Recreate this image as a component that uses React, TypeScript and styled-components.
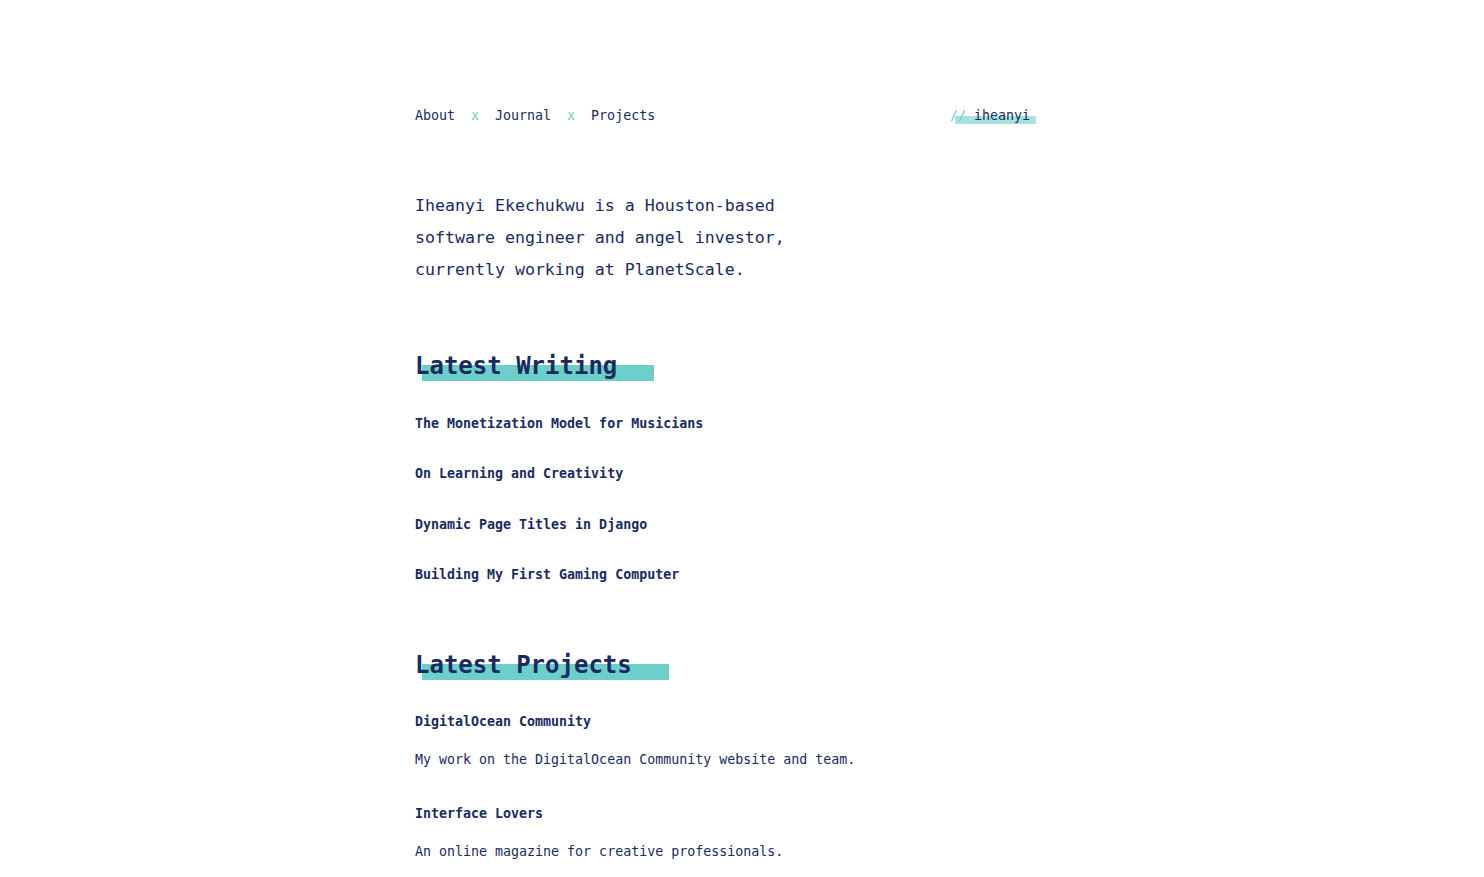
import React from 'react'
import styled, { createGlobalStyle } from 'styled-components'

const navy = '#1a2a5e'
const teal = '#6ccfca'

const GlobalStyle = createGlobalStyle`
  body {
    margin: 0;
    background: #fff;
    color: ${navy};
    font-family: "DejaVu Sans Mono", "Liberation Mono", monospace;
  }
`

const Page = styled.div`
  width: 654px;
  margin: 0 auto;
  padding: 106px 0 40px;
`

const Header = styled.header`
  width: 621px;
  display: flex;
  justify-content: space-between;
  align-items: center;
  font-size: 13.3px;
  line-height: 20px;
`

const Nav = styled.nav`
  display: flex;
  gap: 16px;
`

const NavLink = styled.a`
  color: ${navy};
  text-decoration: none;
`

const Sep = styled.span`
  color: ${teal};
`

const Logo = styled.a`
  position: relative;
  z-index: 0;
  color: ${navy};
  text-decoration: none;
  padding-right: 6px;

  &::after {
    content: '';
    position: absolute;
    z-index: -1;
    left: 5px;
    right: 0;
    top: 10px;
    height: 8px;
    background: ${teal};
    opacity: 0.6;
  }
`

const Slashes = styled.span`
  color: ${teal};
`

const Intro = styled.p`
  margin: 64px 0 0;
  font-size: 16.6px;
  line-height: 32px;
  width: 400px;
`

const Section = styled.section<{ $top: number }>`
  margin-top: ${(p) => p.$top}px;
`

const Heading = styled.h2`
  margin: 0;
  font-size: 24px;
  line-height: 30px;
  font-weight: 700;
`

const Marked = styled.span`
  position: relative;
  z-index: 0;
  padding-right: 37px;

  &::after {
    content: '';
    position: absolute;
    z-index: -1;
    left: 7px;
    right: 0;
    top: 13px;
    height: 16px;
    background: ${teal};
  }
`

const PostList = styled.ul`
  list-style: none;
  margin: 33px 0 0;
  padding: 0;
  display: flex;
  flex-direction: column;
  gap: 30.3px;
`

const PostTitle = styled.a`
  display: block;
  color: ${navy};
  text-decoration: none;
  font-weight: 700;
  font-size: 13.3px;
  line-height: 20px;
`

const ProjectList = styled.div`
  margin-top: 32px;
  display: flex;
  flex-direction: column;
  gap: 34px;
`

const Project = styled.div`
  display: flex;
  flex-direction: column;
  gap: 18px;
`

const ProjectDesc = styled.p`
  margin: 0;
  font-size: 13.3px;
  line-height: 20px;
`

const posts = [
  'The Monetization Model for Musicians',
  'On Learning and Creativity',
  'Dynamic Page Titles in Django',
  'Building My First Gaming Computer'
]

const projects = [
  { name: 'DigitalOcean Community', desc: 'My work on the DigitalOcean Community website and team.' },
  { name: 'Interface Lovers', desc: 'An online magazine for creative professionals.' }
]

export default function App() {
  return (
    <>
      <GlobalStyle />
      <Page>
        <Header>
          <Nav>
            <NavLink href="#">About</NavLink>
            <Sep>x</Sep>
            <NavLink href="#">Journal</NavLink>
            <Sep>x</Sep>
            <NavLink href="#">Projects</NavLink>
          </Nav>
          <Logo href="#">
            <Slashes>//</Slashes> iheanyi
          </Logo>
        </Header>

        <Intro>
          Iheanyi Ekechukwu is a Houston-based software engineer and angel investor, currently
          working at PlanetScale.
        </Intro>

        <Section $top={65}>
          <Heading>
            <Marked>Latest Writing</Marked>
          </Heading>
          <PostList>
            {posts.map((title) => (
              <li key={title}>
                <PostTitle href="#">{title}</PostTitle>
              </li>
            ))}
          </PostList>
        </Section>

        <Section $top={65}>
          <Heading>
            <Marked>Latest Projects</Marked>
          </Heading>
          <ProjectList>
            {projects.map((p) => (
              <Project key={p.name}>
                <PostTitle href="#">{p.name}</PostTitle>
                <ProjectDesc>{p.desc}</ProjectDesc>
              </Project>
            ))}
          </ProjectList>
        </Section>
      </Page>
    </>
  )
}
